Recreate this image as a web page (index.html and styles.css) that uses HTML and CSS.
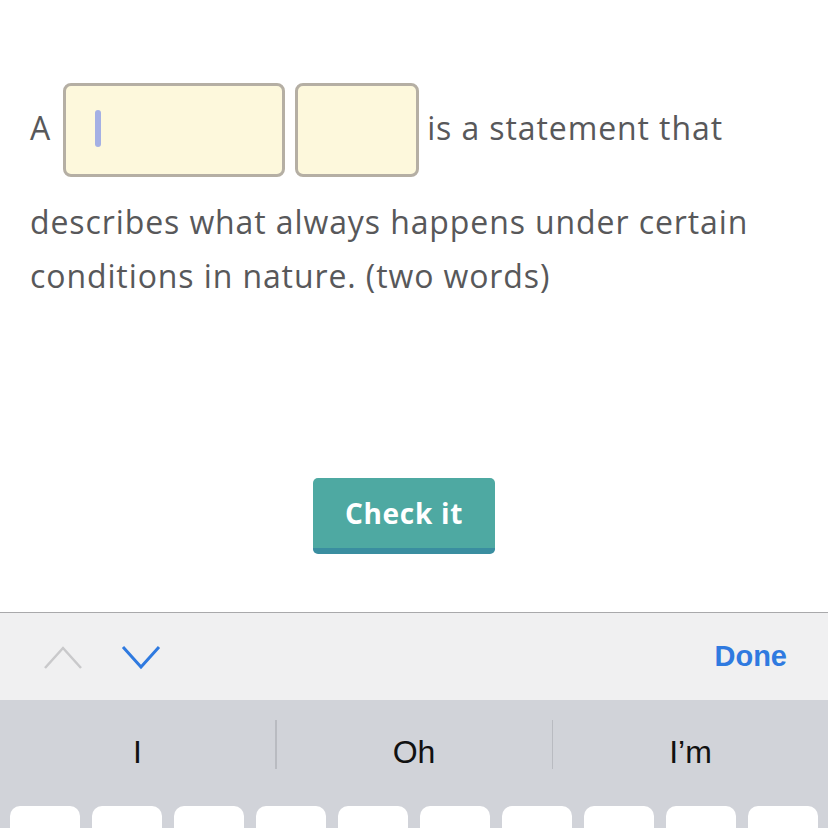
FILE: index.html
```html
<!DOCTYPE html>
<html>
<head>
<meta charset="utf-8">
<link rel="stylesheet" href="styles.css">
</head>
<body>
<div class="page">
  <main class="content">
    <p class="question"><span class="lead">A</span><span class="blank blank-wide"><span class="caret"></span></span><span class="blank blank-narrow"></span><span class="rest">is a statement that </span><span class="rest">describes what always happens under certain conditions in nature. (two words)</span></p>
    <div class="actions">
      <button class="check">Check it</button>
    </div>
  </main>
  <section class="keyboard">
    <div class="toolbar">
      <div class="arrows">
        <svg class="chev" width="40" height="28" viewBox="0 0 40 28"><polyline points="2,25 20,5 38,25" fill="none" stroke="#c9c9cb" stroke-width="2.5"/></svg>
        <svg class="chev" width="40" height="28" viewBox="0 0 40 28"><polyline points="2,4 20,24 38,4" fill="none" stroke="#2f7ae0" stroke-width="3"/></svg>
      </div>
      <span class="done">Done</span>
    </div>
    <div class="suggestions">
      <div class="sugg">I</div>
      <div class="sep"></div>
      <div class="sugg">Oh</div>
      <div class="sep"></div>
      <div class="sugg">I’m</div>
    </div>
    <div class="keys">
      <span class="key"></span><span class="key"></span><span class="key"></span><span class="key"></span><span class="key"></span>
      <span class="key"></span><span class="key"></span><span class="key"></span><span class="key"></span><span class="key"></span>
    </div>
  </section>
</div>
</body>
</html>
```
FILE: styles.css
```css
* { box-sizing: border-box; }
html, body { margin: 0; padding: 0; background: #fff; }
body { font-family: "Open Sans", Lato, sans-serif; }
.page { width: 828px; height: 828px; display: flex; flex-direction: column; overflow: hidden; }
.content { flex: 1; padding: 83px 30px 0 30px; display: flex; flex-direction: column; }
.question {
  margin: 0;
  font-size: 32px;
  line-height: 54px;
  letter-spacing: 0.9px;
  color: #58585a;
}
.lead { margin-right: 12px; }
.blank {
  display: inline-block;
  height: 94px;
  vertical-align: -55px;
  background: #fdf8dc;
  border: 3px solid #b5afa4;
  border-radius: 8px;
  position: relative;
  margin-bottom: 18px;
}
.blank-wide { width: 222px; margin-right: 10px; }
.blank-narrow { width: 124px; margin-right: 8px; }
.caret {
  position: absolute;
  left: 29px; top: 24px;
  width: 6px; height: 37px;
  border-radius: 3px;
  background: #a4b0e4;
}
.actions { display: flex; justify-content: center; padding-right: 20px; margin-top: 175px; }
.check {
  width: 182px; height: 76px;
  border: none;
  border-bottom: 6px solid #3a8ea0;
  border-radius: 5px;
  background: #4ea9a2;
  color: #fff;
  font-family: "Open Sans", sans-serif;
  font-weight: 700;
  font-size: 28px;
  letter-spacing: 0.7px;
  padding: 0;
}
.keyboard { height: 216px; display: flex; flex-direction: column; }
.toolbar {
  height: 88px;
  border-top: 1.5px solid #a9a9ab;
  background: #f0f0f1;
  display: flex; align-items: center; justify-content: space-between;
  padding: 0 41px 0 43px;
}
.arrows { display: flex; gap: 38px; align-items: center; }
.done { color: #2f7ae0; font-family: "Liberation Sans", Arial, sans-serif; font-weight: 700; font-size: 29px; }
.suggestions {
  height: 106px;
  background: #d1d3d9;
  display: flex; align-items: center;
}
.sugg { flex: 1; text-align: center; font-family: "Liberation Sans", Arial, sans-serif; font-size: 32px; color: #111; padding-bottom: 2px; }
.sep { width: 1.5px; height: 49px; background: #b9bbc1; align-self: flex-start; margin-top: 20px; }
.keys { flex: 1; background: #d1d3d9; display: flex; gap: 12px; padding: 0 10px; }
.key { flex: 1; background: #fff; border-radius: 10px 10px 0 0; }
```
